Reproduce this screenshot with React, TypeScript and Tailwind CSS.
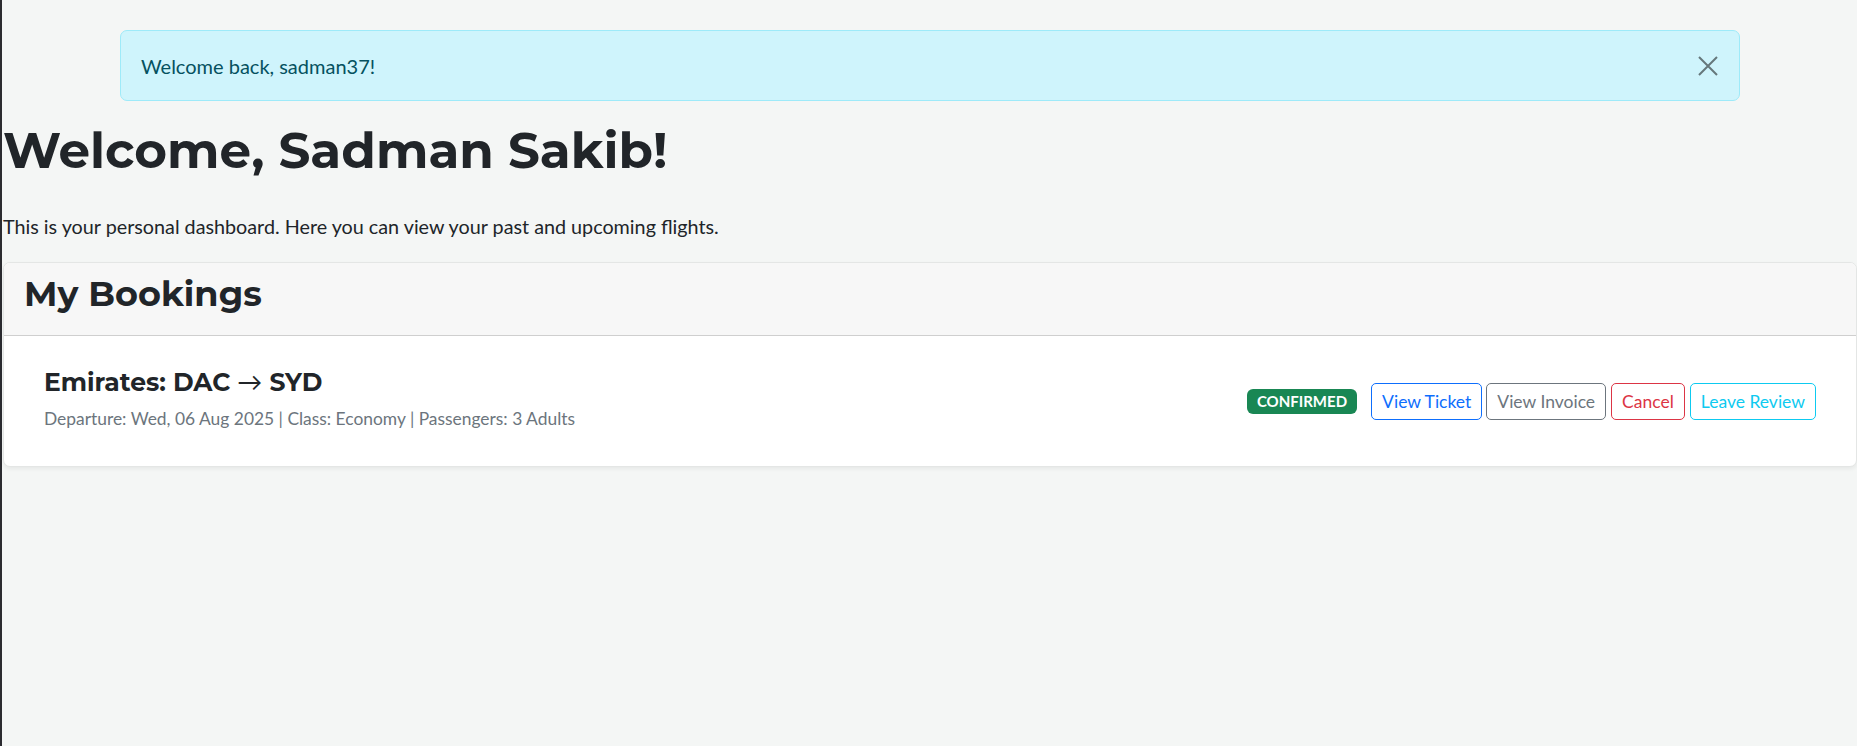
import React from "react";

const heading = { fontFamily: "Montserrat, Inter, 'Noto Sans', sans-serif" } as const;
const body = { fontFamily: "Lato, 'Noto Sans', sans-serif" } as const;

function CloseIcon() {
  return (
    <svg width="20" height="20" viewBox="0 0 20 20" fill="none">
      <path d="M1 1L19 19M19 1L1 19" stroke="#66777b" strokeWidth="2" strokeLinecap="butt" />
    </svg>
  );
}

export default function App() {
  return (
    <div
      className="min-h-screen w-full bg-[#f4f6f5] border-l-2 border-[#2b2b30] pl-[1px] text-[#212529]"
      style={body}
    >
      <div className="pt-[30px]">
        <div className="relative mx-auto w-[1620px] h-[71px] flex items-center rounded-[7px] border border-[#9eeaf9] bg-[#cff4fc] px-[20px] text-[20px] leading-[30px] text-[#055160]">
          <span>Welcome back, sadman37!</span>
          <button className="absolute right-[21px] top-1/2 -translate-y-1/2 flex items-center justify-center" aria-label="Close">
            <CloseIcon />
          </button>
        </div>
      </div>

      <h1 className="mt-[20px] mb-[31px] text-[50px] leading-[60px] font-bold text-[#212529]" style={heading}>
        Welcome, Sadman Sakib!
      </h1>
      <p className="mb-[20px] text-[19.75px] leading-[30px] text-[#212529]">
        This is your personal dashboard. Here you can view your past and upcoming flights.
      </p>

      <div className="bg-white rounded-[7px] border border-[#e4e6e5] shadow-[0_2px_4px_rgba(0,0,0,0.06)] overflow-hidden">
        <div className="h-[73px] bg-[#f7f7f7] border-b border-[#cfcfcf] px-[20px] pt-[10px]">
          <h3 className="text-[35px] leading-[42px] font-bold text-[#212529]" style={heading}>
            My Bookings
          </h3>
        </div>
        <div className="p-[20px]">
          <div className="h-[90px] px-[20px] flex items-center justify-between">
            <div className="flex flex-col -mt-[5px]">
              <div className="text-[25px] leading-[30px] font-bold text-[#212529]" style={heading}>
                Emirates: DAC <span className="font-normal" style={body}>→</span> SYD
              </div>
              <div className="mt-[9px] text-[17.4px] leading-[26px] text-[#6c757d]">
                Departure: Wed, 06 Aug 2025 | Class: Economy | Passengers: 3 Adults
              </div>
            </div>
            <div className="flex items-center">
              <span className="mr-[14px] inline-flex items-center justify-center h-[25px] px-[10px] rounded-[6px] bg-[#198754] text-white text-[15px] leading-[15px] font-bold">
                CONFIRMED
              </span>
              <button className="h-[37px] px-[10px] rounded-[5px] border border-[#0d6efd] text-[#0d6efd] text-[17.5px] leading-[25px] bg-transparent">
                View Ticket
              </button>
              <button className="ml-[4px] h-[37px] px-[10px] rounded-[5px] border border-[#6c757d] text-[#6c757d] text-[17.5px] leading-[25px] bg-transparent">
                View Invoice
              </button>
              <button className="ml-[5px] h-[37px] px-[10px] rounded-[5px] border border-[#dc3545] text-[#dc3545] text-[17.5px] leading-[25px] bg-transparent">
                Cancel
              </button>
              <button className="ml-[5px] h-[37px] px-[10px] rounded-[5px] border border-[#0dcaf0] text-[#0dcaf0] text-[17.5px] leading-[25px] bg-transparent">
                Leave Review
              </button>
            </div>
          </div>
        </div>
      </div>
    </div>
  );
}
